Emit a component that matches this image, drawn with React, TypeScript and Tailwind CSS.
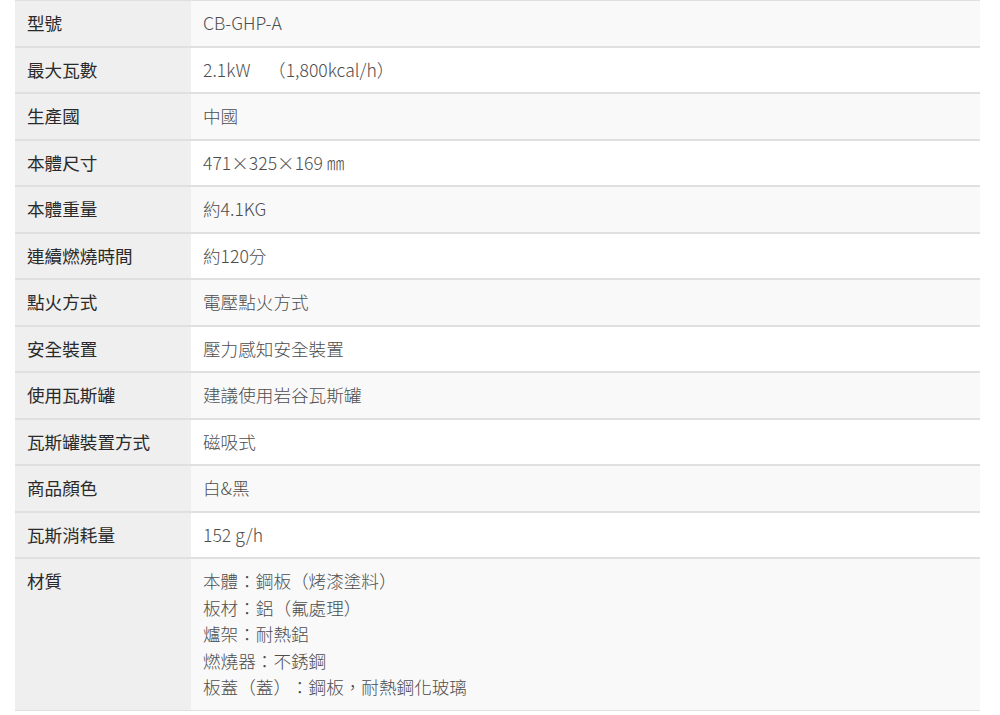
const specs: { label: string; value: string[] }[] = [
  { label: "型號", value: ["CB-GHP-A"] },
  { label: "最大瓦數", value: ["2.1kW　（1,800kcal/h）"] },
  { label: "生產國", value: ["中國"] },
  { label: "本體尺寸", value: ["471×325×169 ㎜"] },
  { label: "本體重量", value: ["約4.1KG"] },
  { label: "連續燃燒時間", value: ["約120分"] },
  { label: "點火方式", value: ["電壓點火方式"] },
  { label: "安全裝置", value: ["壓力感知安全裝置"] },
  { label: "使用瓦斯罐", value: ["建議使用岩谷瓦斯罐"] },
  { label: "瓦斯罐裝置方式", value: ["磁吸式"] },
  { label: "商品顏色", value: ["白&黑"] },
  { label: "瓦斯消耗量", value: ["152 g/h"] },
  {
    label: "材質",
    value: [
      "本體：鋼板（烤漆塗料）",
      "板材：鋁（氟處理）",
      "爐架：耐熱鋁",
      "燃燒器：不銹鋼",
      "板蓋（蓋）：鋼板，耐熱鋼化玻璃",
    ],
  },
];

export default function App() {
  return (
    <div className="min-h-[715px] bg-white px-[15px] pr-[20px] font-['Noto_Sans_CJK_TC','Noto_Sans',sans-serif] text-[17.6px] leading-[26.5px] [text-spacing-trim:space-all] [font-feature-settings:'chws'_0]">
      <div className="flex flex-col">
        {specs.map((row, i) => (
          <div key={row.label} className="flex border-y border-[#e0e0e0]">
            <div className="w-[176px] shrink-0 bg-[#efefef] px-3 py-[9px] font-normal text-[#2a2a2a]">
              {row.label}
            </div>
            <div
              className={
                i % 2 === 0
                  ? "flex-1 bg-[#f9f9f9] px-3 py-[9px] font-light text-[#4d4d4d]"
                  : "flex-1 bg-white px-3 py-[9px] font-light text-[#4d4d4d]"
              }
            >
              {row.value.map((line) => (
                <div key={line}>{line}</div>
              ))}
            </div>
          </div>
        ))}
      </div>
    </div>
  );
}
